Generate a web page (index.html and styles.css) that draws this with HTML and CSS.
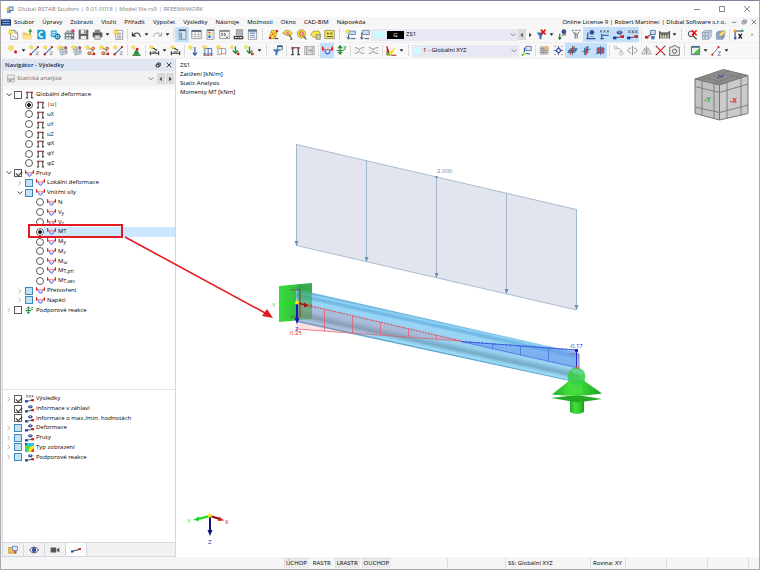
FILE: index.html
```html
<!DOCTYPE html>
<html lang="cs">
<head>
<meta charset="utf-8">
<title>Dlubal RSTAB Student</title>
<link rel="stylesheet" href="styles.css">
</head>
<body>
<svg class="defs" aria-hidden="true">
  <symbol id="star" viewBox="0 0 16 16"><path d="M5 0v10M0 5h10M1.500 1.500l7 7M8.500 1.500l-7 7" stroke="#d9b400" stroke-width="1.200"/><circle cx="5" cy="5" r="2.600" fill="#ffe640"/></symbol>
  <symbol id="app" viewBox="0 0 16 16"><path d="M2 6h8v9H2z" fill="#6f9fd8"/><path d="M5 2h10v9H5z" fill="#4b7db8"/><path d="M7 4h6v5H7z" fill="#cfe2f7"/><path d="M1 4h5v6H1z" fill="#e7c456"/></symbol>
  <symbol id="flag" viewBox="0 0 16 10"><path d="M0 0h16v10H0z" fill="#123a7c"/><path d="M2 3h12M2 7h12" stroke="#b9c9e8" stroke-width="1.500"/></symbol>
  <symbol id="new" viewBox="0 0 16 16"><path d="M4 2h6l4 4v9H4z" fill="#fff" stroke="#666"/><path d="M10 2v4h4M6 10l6 3" fill="none" stroke="#68788a"/><use href="#star" width="14" height="14"/></symbol>
  <symbol id="open" viewBox="0 0 16 16"><path d="M1 5h5l1 2h7v8H1z" fill="#ecc55c"/><path d="M2 9h14l-3 6H1z" fill="#ffe193"/><path d="M12 7V2M10 4l2-3 2 3" fill="none" stroke="#2c9c42" stroke-width="1.800"/></symbol>
  <symbol id="cloud" viewBox="0 0 16 16"><path d="M2 1h9l3 3v11H2z" fill="#159bd6"/><path d="M10 5a3.500 3.500 0 1 0 0 6" fill="none" stroke="#fff" stroke-width="2.200"/></symbol>
  <symbol id="cloud2" viewBox="0 0 16 16"><path d="M1 2h9v10H1z" fill="#4db6e2"/><path d="M3 5h5M3 8h5" stroke="#fff"/><circle cx="11" cy="11" r="3.300" fill="#fff" stroke="#1789c4" stroke-width="2"/><path d="M11 6v10M6 11h10" stroke="#1789c4"/></symbol>
  <symbol id="manager" viewBox="0 0 16 16"><path d="M1 5h14v10H1z" fill="#727b83"/><path d="M3 2h9v4H3z" fill="#a8b2ba"/><path d="M3 8h3v2H3zm4 0h3v2H7zm4 0h2v2h-2zM3 12h3v2H3zm4 0h3v2H7z" fill="#fff"/><circle cx="13" cy="3" r="2.500" fill="#d84343"/></symbol>
  <symbol id="save" viewBox="0 0 16 16"><path d="M1 1h14v14H1z" fill="#666"/><path d="M4 1h8v6H4zM4 10h8v5H4z" fill="#eee"/><path d="M9 2h2v4H9z" fill="#666"/></symbol>
  <symbol id="print" viewBox="0 0 16 16"><path d="M4 1h8v4H4z" fill="#888"/><path d="M1 5h14v7H1z" fill="#555"/><path d="M4 9h8v6H4z" fill="#ddd" stroke="#777"/></symbol>
  <symbol id="report" viewBox="0 0 16 16"><path d="M4 2h10v13H4z" fill="#fff" stroke="#777"/><path d="M6 6h6M6 8.500h6M6 11h6M6 13h6" stroke="#777"/><use href="#star" width="14" height="14"/></symbol>
  <symbol id="undo" viewBox="0 0 16 16"><path d="M2 5v5h5M3 9c4-5 9-4 11 2" fill="none" stroke="#333" stroke-width="1.500"/></symbol>
  <symbol id="redo" viewBox="0 0 16 16"><path d="M14 5v5H9M13 9C9 4 4 5 2 11" fill="none" stroke="#999" stroke-width="1.300"/></symbol>
  <symbol id="nav" viewBox="0 0 16 16"><path d="M3 1h10v14H3z" fill="#d9e5f1" stroke="#6d7d8c"/><path d="M3 2h10" stroke="#47596b" stroke-width="2"/><path d="M5 5h2v9H5z" fill="#5b82aa"/></symbol>
  <symbol id="table" viewBox="0 0 16 16"><path d="M1 2h14v12H1z" fill="#fff" stroke="#777"/><path d="M1 3h14" stroke="#5d6e80" stroke-width="3"/><path d="M1 8h14M1 11h14M6 4v10M11 4v10" stroke="#aaa"/></symbol>
  <symbol id="panel" viewBox="0 0 16 16"><path d="M3 1h10v14H3z" fill="#fff" stroke="#777"/><path d="M3 2h10" stroke="#56687a" stroke-width="2"/><path d="M5 4h3v2H5z" fill="#e33"/><path d="M5 6h3v2H5z" fill="#fc2"/><path d="M5 8h3v2H5z" fill="#3c4"/><path d="M5 10h3v3H5z" fill="#24d"/><path d="M9.500 6h2M9.500 9h2M9.500 12h2" stroke="#777"/></symbol>
  <symbol id="console" viewBox="0 0 16 16"><path d="M1 2h14v12H1z" fill="#f6f6f6" stroke="#777"/><path d="M1 3h14" stroke="#777" stroke-width="2"/><path d="M3 6l3 2-3 2M7 6l3 2-3 2M10 12h3" fill="none" stroke="#333" stroke-width="1.200"/></symbol>
  <symbol id="script" viewBox="0 0 16 16"><path d="M5 1h9v8H5z" fill="#ccd2d8" stroke="#777"/><path d="M6 3h7M6 6h7" stroke="#777"/><path d="M1 10h14v5H1z" fill="#444"/><path d="M3 12.500h3M7 12.500h2M10 12.500h3" stroke="#eee" stroke-width="1.500"/></symbol>
  <symbol id="list" viewBox="0 0 16 16"><path d="M2 1h12v14H2z" fill="#fff" stroke="#777"/><path d="M2 2.500h12" stroke="#56799c" stroke-width="3"/><path d="M4 6h8M4 9h8M4 12h8" stroke="#6f93b7" stroke-width="1.500"/></symbol>
  <symbol id="surf" viewBox="0 0 16 16"><path d="M5 2h9l-4 12H2z" fill="#f6e23b" stroke="#b28c12"/><path d="M5 4l6 9M12 4L3 11" stroke="#d94b2d"/><circle cx="3" cy="13" r="1.700" fill="#c22"/><circle cx="13" cy="3" r="1.700" fill="#c22"/><path d="M10 14h5" stroke="#333" stroke-width="1.500"/></symbol>
  <symbol id="surf2" viewBox="0 0 16 16"><path d="M1 6l4-4h6l4 4-3 4-6-1z" fill="#f6e23b" stroke="#8d8434"/><circle cx="8" cy="6" r="2.500" fill="#e88"/><path d="M10 8l4 6M12 15h3" stroke="#666" stroke-width="1.800"/></symbol>
  <symbol id="surf3" viewBox="0 0 16 16"><circle cx="8" cy="7" r="6" fill="#f6e23b" stroke="#8d8434"/><circle cx="8" cy="7" r="3" fill="#f6b3a3" stroke="#c03030"/><path d="M11 10l4 5" stroke="#666" stroke-width="2"/></symbol>
  <symbol id="surf4" viewBox="0 0 16 16"><path d="M1 8l4-5h8l2 4-2 6-8-1z" fill="#f6e84b" stroke="#8d8434"/><path d="M9 8h6v7H9z" fill="#c9c9a8" stroke="#777"/></symbol>
  <symbol id="surf5" viewBox="0 0 16 16"><path d="M1 2h14v12H1z" fill="#f6e84b" stroke="#777"/><path d="M4 5h3v3H4zm5 0h3v3H9z" fill="#8d6d22"/><path d="M4 11h9" stroke="#555" stroke-width="1.500"/></symbol>
  <symbol id="case" viewBox="0 0 16 16"><path d="M6 3h9v5H6z" fill="#c6dff6" stroke="#4a6c91"/><path d="M5 8v6M3 12l2 3 2-3M8 14h7" fill="none" stroke="#31567e" stroke-width="1.400"/><use href="#star" width="12" height="12"/></symbol>
  <symbol id="case2" viewBox="0 0 16 16"><path d="M5 2h10v6H5z" fill="#c6dff6" stroke="#4a6c91"/><path d="M4 5v9M2 12l2 3 2-3M8 14h7" fill="none" stroke="#31567e" stroke-width="1.400"/></symbol>
  <symbol id="filterx" viewBox="0 0 16 16"><path d="M1 5h11l-4 5v5H5v-5z" fill="#3a6fb3"/><path d="M7 1l7 7M14 1L7 8" stroke="#e11" stroke-width="2.400"/></symbol>
  <symbol id="filter" viewBox="0 0 16 16"><path d="M1 6h12l-5 5v4H5v-4z" fill="#4a7fc3"/><path d="M8 1h7v6H8z" fill="#dce9f7" stroke="#35567e"/><path d="M8 2h7" stroke="#35567e" stroke-width="2"/></symbol>
  <symbol id="force" viewBox="0 0 16 16"><path d="M4 7v8M2 12l2 3 2-3" fill="none" stroke="#287a36" stroke-width="1.700"/><circle cx="10" cy="4" r="3.500" fill="#3e4f9a"/><path d="M7 9l6-1" stroke="#888" stroke-width="2"/></symbol>
  <symbol id="forces" viewBox="0 0 16 16"><path d="M1 2h3M6 2h3M11 2h3M3 4l3 4v6M12 4L9 8v6M7 5v5" fill="none" stroke="#666" stroke-width="1.400"/></symbol>
  <symbol id="res" viewBox="0 0 16 16"><path d="M2 13L14 11" stroke="#555" stroke-width="1.600"/><path d="M0 11h5v4H0z" fill="#1541b8"/><path d="M11 9h5v4h-5z" fill="#d42020"/><path d="M5 5c2-4 7-4 9 0-2 4-7 4-9 0z" fill="#3e4f9a"/><circle cx="9.500" cy="4.500" r="1.300" fill="#b9cdf1"/></symbol>
  <symbol id="resx" viewBox="0 0 16 16"><path d="M2 13L14 11" stroke="#555" stroke-width="1.600"/><path d="M0 11h5v4H0z" fill="#1541b8"/><path d="M11 9h5v4h-5z" fill="#d42020"/><path d="M2 2l3 4M5 2L2 6M7 2l3 4M10 2L7 6M12 2l3 4M15 2l-3 4" stroke="#333"/></symbol>
  <symbol id="dimv" viewBox="0 0 16 16"><path d="M4 5v9h11M2 14h5" fill="none" stroke="#234f9e" stroke-width="1.700"/><circle cx="10" cy="5" r="3.500" fill="#3e4f9a"/><path d="M7 11h6" stroke="#777"/></symbol>
  <symbol id="dimx" viewBox="0 0 16 16"><path d="M2 2l2 3M4 2L2 5M7 2l2 3M9 2L7 5M12 2l2 3M14 2l-2 3" stroke="#333"/><path d="M4 7v7M2 14h5M4 9h10" fill="none" stroke="#234f9e" stroke-width="1.600"/></symbol>
  <symbol id="member" viewBox="0 0 16 16"><path d="M2 13L14 4" stroke="#555" stroke-width="1.500"/><path d="M0 10h5v4H0z" fill="#d42020"/><path d="M8 2h7v6H8z" fill="#cbdcf0" stroke="#35567e"/><path d="M9 10h5v5H9z" fill="#4676b5"/></symbol>
  <symbol id="ruler" viewBox="0 0 16 16"><path d="M1 3v11M15 3v11M1 6h14" stroke="#333" stroke-width="1.500"/><path d="M3 8h10v5H3z" fill="#e9df8e" stroke="#555"/><path d="M5 8v3M8 8v3M11 8v3" stroke="#333"/></symbol>
  <symbol id="magx" viewBox="0 0 16 16"><circle cx="6" cy="7" r="4" fill="none" stroke="#555" stroke-width="1.600"/><path d="M9 10l5 5" stroke="#555" stroke-width="2"/><path d="M7 2l7 7M14 2L7 9" stroke="#e11" stroke-width="2.200"/></symbol>
  <symbol id="box" viewBox="0 0 16 16"><path d="M2 5l4-3h9v9l-4 4H2z" fill="#c7d6e8" stroke="#8093aa"/><path d="M2 5h9v10M11 5l4-3M6 5v10M2 10h9" fill="none" stroke="#8093aa"/></symbol>
  <symbol id="boxs" viewBox="0 0 16 16"><path d="M2 6l3-3h9v8l-3 4H2z" fill="#8da9d3" stroke="#7f95b8"/><path d="M2 6h9v9" fill="none" stroke="#5f7ba8"/><path d="M5 8l7-6 3 3-6 6z" fill="#ffe27a" stroke="#aa8b31"/></symbol>
  <symbol id="axes" viewBox="0 0 16 16"><path d="M3 2v13M2 3h13" stroke="#1d3d86" stroke-width="1.600"/><path d="M1 1h4v4H1z" fill="#e0a020"/><path d="M2 12h3v3H2z" fill="#2a52b0"/><path d="M12 1h3v3h-3z" fill="#279c36"/><path d="M8 7l5 7M13 7l-5 7" stroke="#111" stroke-width="1.700"/></symbol>
  <symbol id="node" viewBox="0 0 16 16"><circle cx="11" cy="10" r="2.200" fill="#c22"/><use href="#star" width="14" height="14"/></symbol>
  <symbol id="line" viewBox="0 0 16 16"><path d="M2 14L13 3" stroke="#456da0" stroke-width="1.500"/><circle cx="2.500" cy="13.500" r="1.700" fill="#c22"/><circle cx="13" cy="3" r="1.700" fill="#c22"/><path d="M10 10h4l-4 4h4" fill="none" stroke="#777"/><use href="#star" width="11" height="11"/></symbol>
  <symbol id="grid" viewBox="0 0 16 16"><path d="M3 4l10-2 2 10-9 3z" fill="#dbe2e9" stroke="#8e99a5"/><path d="M7 3l2 11M11 3l2 10M4 8l10-3M5 11l10-2" stroke="#8e99a5"/><use href="#star" width="12" height="12"/><circle cx="13" cy="4" r="1.800" fill="#c33"/></symbol>
  <symbol id="rel" viewBox="0 0 16 16"><path d="M5 4l7 4-6 5 8 1" fill="none" stroke="#555"/><circle cx="12" cy="5" r="2" fill="#f0d22c" stroke="#a22"/><circle cx="6" cy="12" r="2" fill="#f0d22c" stroke="#a22"/><circle cx="13" cy="13" r="2" fill="#c22"/><use href="#star" width="12" height="12"/></symbol>
  <symbol id="supp" viewBox="0 0 16 16"><path d="M8 5l5 9H3z" fill="#27913a"/><path d="M2 15h12" stroke="#1d6b2b" stroke-width="1.500"/><circle cx="9" cy="6" r="2" fill="#c22"/><use href="#star" width="11" height="11"/></symbol>
  <symbol id="dim" viewBox="0 0 16 16"><path d="M1 12h14M2 9v6M14 9v6M5 4l7 4" stroke="#333" stroke-width="1.500"/><path d="M5 9h6v3H5z" fill="#888"/><use href="#star" width="11" height="11"/></symbol>
  <symbol id="load" viewBox="0 0 16 16"><path d="M10 3v11M7 11l3 4 3-4" fill="none" stroke="#315cab" stroke-width="1.700"/><use href="#star" width="12" height="12"/></symbol>
  <symbol id="loads" viewBox="0 0 16 16"><path d="M4 5h10v9M9 5v9M4 5v9M2 12l2 3 2-3M7 12l2 3 2-3M12 12l2 3 1-3" fill="none" stroke="#315cab" stroke-width="1.200"/><path d="M2 15h13" stroke="#b33"/><use href="#star" width="11" height="11"/></symbol>
  <symbol id="loadg" viewBox="0 0 16 16"><path d="M3 5h11v9M8 5v9M3 5v9" fill="none" stroke="#999" stroke-width="1.300"/><path d="M2 14l12-2" stroke="#b77"/><use href="#star" width="11" height="11"/></symbol>
  <symbol id="sett" viewBox="0 0 16 16"><path d="M8 2v9M4 8l4 4 4-4" fill="none" stroke="#268b38" stroke-width="2"/><circle cx="12" cy="13" r="2" fill="#c22"/><use href="#star" width="10" height="10"/></symbol>
  <symbol id="frame" viewBox="0 0 16 16"><path d="M4 14V4h8v10M1.500 14h4M10.500 14h4" fill="none" stroke="#444" stroke-width="1.800"/><path d="M2 3h3v3H2zM11 3h3v3h-3z" fill="#b33"/></symbol>
  <symbol id="anim" viewBox="0 0 16 16"><path d="M1 2h14v12H1z" fill="#ddd" stroke="#999"/><path d="M4 2v12M12 2v12M6 8h4M9 6l2 2-2 2" fill="none" stroke="#888"/></symbol>
  <symbol id="mom" viewBox="0 0 16 16"><path d="M0 7h16" stroke="#c33" stroke-width="1.400"/><path d="M1 2v6M15 2v6" stroke="#d22" stroke-width="2"/><path d="M0 2l3 5M16 2l-3 5" stroke="#d22"/><path d="M4 8l2 4 2 1 2-1 2-4" fill="#dfe2ff" stroke="#3452e8" stroke-width="1.600"/></symbol>
  <symbol id="react" viewBox="0 0 16 16"><path d="M6 2v12M3 5l3-4 3 4M1 8h10M3 10l3 3 3-3" fill="none" stroke="#248c36" stroke-width="1.700"/><path d="M11 3h4M11 6h3" stroke="#248c36" stroke-width="1.500"/></symbol>
  <symbol id="wave" viewBox="0 0 16 16"><path d="M1 4h3l2 2h3l2-2h4M1 12h3l2-2h3l2 2h4" fill="none" stroke="#8a8f94" stroke-width="1.400"/><path d="M2 8h2M7 8h2M12 8h2" stroke="#bbb"/></symbol>
  <symbol id="scale" viewBox="0 0 16 16"><path d="M1 1l6 14H1z" fill="#e22"/><path d="M1 9l8 6H1z" fill="#1db42c"/><path d="M3 13L14 2l-6 13z" fill="#ffd21f"/><path d="M4 10L1 2M8 15h7" stroke="#a22" stroke-width="1.500"/></symbol>
  <symbol id="cs" viewBox="0 0 16 16"><path d="M5 13V4M5 12l8 1" stroke="#2357ae" stroke-width="1.600"/><path d="M7 2h8v6H7z" fill="#d6e5f5" stroke="#35567e"/><path d="M1 15l5-3" stroke="#279b37" stroke-width="2"/><circle cx="5" cy="12" r="2" fill="#de3"/></symbol>
  <symbol id="gridd" viewBox="0 0 16 16"><path d="M1 2h13v12H1z" fill="#cfcfcf"/><path d="M1 5h13M1 8h13M1 11h13M4 2v12M7 2v12M10 2v12" stroke="#888"/><path d="M7 3l5-2 3 4-5 3z" fill="#e7b77d"/></symbol>
  <symbol id="snap" viewBox="0 0 16 16"><path d="M8 1v14M1 8h14M2 2h2M12 2h2M2 14h2M12 14h2" stroke="#667" stroke-width="1.200"/><path d="M8 4l4 4-4 4-4-4z" fill="#e1e7ff" stroke="#334ba5" stroke-width="1.600"/></symbol>
  <symbol id="plane" viewBox="0 0 16 16"><path d="M1 11L5 5h10l-4 6z" fill="#5c87bd" stroke="#345f96"/><path d="M8 1v14M2 8h12" stroke="#3d4e65"/><path d="M11 2l-7 12" stroke="#d33" stroke-width="1.500"/></symbol>
  <symbol id="planer" viewBox="0 0 16 16"><path d="M5 5l5-3v9l-5 3z" fill="#5c87bd" stroke="#345f96"/><path d="M1 10l13-4" stroke="#3d4e65"/><path d="M10 2l-3 13" stroke="#d33" stroke-width="1.500"/></symbol>
  <symbol id="planeb" viewBox="0 0 16 16"><path d="M3 4h10v8H3z" fill="#d64a52" stroke="#345f96"/><path d="M1 13l13-8M8 1v14" stroke="#345f96"/></symbol>
  <symbol id="g1" viewBox="0 0 16 16"><circle cx="4" cy="4" r="2" fill="none" stroke="#999"/><circle cx="12" cy="12" r="2.500" fill="none" stroke="#999"/><path d="M6 5c5 0 6 2 6 5" fill="none" stroke="#999"/></symbol>
  <symbol id="g2" viewBox="0 0 16 16"><path d="M8 1v14M6 4c-6 2-6 6 0 8M10 4c6 2 6 6 0 8" fill="none" stroke="#888" stroke-width="1.300"/></symbol>
  <symbol id="g3" viewBox="0 0 16 16"><path d="M8 1v14M6 4v9H1zM10 4v9h5z" fill="none" stroke="#999" stroke-width="1.200"/></symbol>
  <symbol id="rx" viewBox="0 0 16 16"><path d="M2 2l12 12M14 2L2 14" stroke="#d22" stroke-width="1.800"/><path d="M1 1h2v2H1zm12 0h2v2h-2zM1 13h2v2H1zm12 0h2v2h-2z" fill="#444"/></symbol>
  <symbol id="cam" viewBox="0 0 16 16"><path d="M1 3h4l1-2h4l1 2h4v12H1z" fill="#eee" stroke="#666" stroke-width="1.300"/><circle cx="8" cy="9" r="3" fill="none" stroke="#555" stroke-width="1.400"/></symbol>
  <symbol id="win" viewBox="0 0 16 16"><path d="M2 2h12v12H2z" fill="#e6f3e4" stroke="#44647f" stroke-width="1.300"/><path d="M2 3h12" stroke="#44647f" stroke-width="2"/><path d="M4 13l9-8v8z" fill="#53b64e"/></symbol>
  <symbol id="sline" viewBox="0 0 16 16"><path d="M2 14L11 3" stroke="#7289a5" stroke-width="1.400"/><circle cx="2" cy="14" r="1.600" fill="#c22"/><circle cx="11" cy="3" r="1.600" fill="#c22"/><path d="M10 10h4l-4 5h4" fill="none" stroke="#44639d"/></symbol>
  <symbol id="contour" viewBox="0 0 16 16"><path d="M0 0h16v16H0z" fill="#20c7ee"/><path d="M0 0h5C6 8 9 10 16 10v6h-9C2 13 0 8 0 0z" fill="#5be034"/><path d="M16 5v11H6c0-7 4-11 10-11z" fill="#ffe52a"/><path d="M16 10v6h-5c0-4 2-6 5-6z" fill="#f2401c"/><path d="M0 0h3v4H0z" fill="#163bd2"/></symbol>
  <symbol id="data" viewBox="0 0 16 16"><path d="M1 4h5l1 2h6v7H1z" fill="#f2c94e" stroke="#a98120"/><path d="M7 2h8v7H7z" fill="#dce9fa" stroke="#2e62b8"/><path d="M9 9l2 5 3-3z" fill="#d33"/></symbol>
  <symbol id="eye" viewBox="0 0 16 16"><path d="M1 8c4-6 10-6 14 0-4 6-10 6-14 0z" fill="#fff" stroke="#333f66" stroke-width="1.500"/><circle cx="8" cy="8" r="3.500" fill="#39509a"/></symbol>
  <symbol id="video" viewBox="0 0 16 16"><path d="M1 4h9v8H1zM11 7l4-3v8l-4-3z" fill="#555"/></symbol>
  <symbol id="beam" viewBox="0 0 16 16"><path d="M2 10L14 7" stroke="#555" stroke-width="1.700"/><path d="M0 9h4v3H0z" fill="#1541b8"/><path d="M12 5h4v3h-4z" fill="#d42020"/></symbol>
  <symbol id="drive" viewBox="0 0 16 16"><path d="M2 2h12v12H2z" fill="#eee" stroke="#888"/><path d="M2 9h12M4 12h5" stroke="#777" stroke-width="1.500"/></symbol>
  <symbol id="dd" viewBox="0 0 8 8"><path d="M1 2h6L4 6z" fill="#222"/></symbol>
  <symbol id="right" viewBox="0 0 8 8"><path d="M2 1l3 3-3 3" fill="none" stroke="#999"/></symbol>
  <symbol id="down" viewBox="0 0 8 8"><path d="M1 2l3 3 3-3" fill="none" stroke="#333" stroke-width="1.300"/></symbol>
  <symbol id="prev" viewBox="0 0 8 8"><path d="M5 1v6L2 4z" fill="#444"/></symbol>
  <symbol id="next" viewBox="0 0 8 8"><path d="M3 1v6l3-3z" fill="#222"/></symbol>
  <symbol id="min" viewBox="0 0 8 8"><path d="M1 4.500h6" stroke="currentColor"/></symbol>
  <symbol id="max" viewBox="0 0 8 8"><path d="M1.500 1.500h5v5h-5z" fill="none" stroke="currentColor"/></symbol>
  <symbol id="restore" viewBox="0 0 8 8"><path d="M1.500 3.500h4v3h-4zM3 3V1.500h4V5H6" fill="none" stroke="currentColor"/></symbol>
  <symbol id="close" viewBox="0 0 8 8"><path d="M1 1l6 6M7 1L1 7" stroke="currentColor"/></symbol>
</svg>

<div class="window">
  <header class="titlebar">
    <svg class="appicon"><use href="#app"/></svg>
    <h1>Dlubal RSTAB Student | 9.01.0018 | Model file.rs9 | RFEEM6WORK</h1>
    <div class="winbtns">
      <button aria-label="Minimalizovat"><svg><use href="#min"/></svg></button>
      <button aria-label="Maximalizovat"><svg><use href="#max"/></svg></button>
      <button aria-label="Zavřít"><svg><use href="#close"/></svg></button>
    </div>
  </header>

  <nav class="menubar">
    <svg class="flag"><use href="#flag"/></svg>
    <button>Soubor</button><button>Úpravy</button><button>Zobrazit</button><button>Vložit</button><button>Přiřadit</button><button>Výpočet</button><button>Výsledky</button><button>Nástroje</button><button>Možnosti</button><button>Okno</button><button>CAD-BIM</button><button>Nápověda</button>
    <span class="license">Online License 9 | Robert Martinec | Dlubal Software s.r.o.</span>
    <div class="docbtns">
      <button aria-label="Minimalizovat dokument"><svg><use href="#min"/></svg></button>
      <button aria-label="Obnovit dokument"><svg><use href="#restore"/></svg></button>
      <button aria-label="Zavřít dokument"><svg><use href="#close"/></svg></button>
    </div>
  </nav>

  <div class="toolbar">
    <button class="tb" aria-label="Nový"><svg><use href="#new"/></svg></button>
    <button class="tb" aria-label="Otevřít"><svg><use href="#open"/></svg></button>
    <button class="tb" aria-label="Cloud"><svg><use href="#cloud"/></svg></button>
    <button class="tb" aria-label="Synchronizovat"><svg><use href="#cloud2"/></svg></button>
    <button class="tb" aria-label="Správce"><svg><use href="#manager"/></svg></button>
    <button class="tb" aria-label="Uložit"><svg><use href="#save"/></svg></button>
    <button class="tb" aria-label="Tisk"><svg><use href="#print"/></svg></button>
    <button class="more" aria-label="Možnosti tisku"><svg><use href="#dd"/></svg></button>
    <button class="tb" aria-label="Protokol"><svg><use href="#report"/></svg></button>
    <i class="sep"></i>
    <button class="tb" aria-label="Zpět"><svg><use href="#undo"/></svg></button>
    <button class="more" aria-label="Historie zpět"><svg><use href="#dd"/></svg></button>
    <button class="tb" aria-label="Znovu"><svg><use href="#redo"/></svg></button>
    <button class="more" aria-label="Historie znovu"><svg><use href="#dd"/></svg></button>
    <i class="sep"></i>
    <button class="tb on" aria-label="Navigátor"><svg><use href="#nav"/></svg></button>
    <button class="tb" aria-label="Tabulky"><svg><use href="#table"/></svg></button>
    <button class="tb" aria-label="Panel"><svg><use href="#panel"/></svg></button>
    <button class="tb" aria-label="Konzole"><svg><use href="#console"/></svg></button>
    <button class="tb" aria-label="Skript"><svg><use href="#script"/></svg></button>
    <button class="tb" aria-label="Seznam"><svg><use href="#list"/></svg></button>
    <i class="sep grip"></i>
    <button class="tb" aria-label="Výběr plochy"><svg><use href="#surf"/></svg></button>
    <button class="tb" aria-label="Výběr oblasti"><svg><use href="#surf2"/></svg></button>
    <button class="tb" aria-label="Výběr kruhem"><svg><use href="#surf3"/></svg></button>
    <button class="tb" aria-label="Výběr polygonem"><svg><use href="#surf4"/></svg></button>
    <button class="tb" aria-label="Výběr oknem"><svg><use href="#surf5"/></svg></button>
    <i class="sep grip"></i>
    <button class="tb" aria-label="Nový zatěžovací stav"><svg><use href="#case"/></svg></button>
    <button class="tb" aria-label="Zatěžovací stavy"><svg><use href="#case2"/></svg></button>
    <div class="combo">
      <i class="chip"></i><i class="chip"></i><b class="tag">G</b>
      <select aria-label="Zatěžovací stav"><option>ZS1</option></select>
      <svg class="caret"><use href="#down"/></svg>
    </div>
    <button class="step dim" aria-label="Předchozí"><svg><use href="#prev"/></svg></button>
    <button class="step" aria-label="Další"><svg><use href="#next"/></svg></button>
    <button class="tb" aria-label="Zrušit filtr"><svg><use href="#filterx"/></svg></button>
    <button class="more" aria-label="Možnosti filtru"><svg><use href="#dd"/></svg></button>
    <button class="tb" aria-label="Zatížení"><svg><use href="#force"/></svg></button>
    <button class="tb" aria-label="Hodnoty zatížení"><svg><use href="#forces"/></svg></button>
    <button class="tb on" aria-label="Reakce"><svg><use href="#dimv"/></svg></button>
    <button class="tb on" aria-label="Hodnoty reakcí"><svg><use href="#dimx"/></svg></button>
    <button class="tb on" aria-label="Výsledky"><svg><use href="#res"/></svg></button>
    <button class="tb on" aria-label="Hodnoty výsledků"><svg><use href="#resx"/></svg></button>
    <i class="sep"></i>
    <button class="tb" aria-label="Řez"><svg><use href="#member"/></svg></button>
    <button class="tb" aria-label="Kóty"><svg><use href="#ruler"/></svg></button>
    <button class="more" aria-label="Možnosti kót"><svg><use href="#dd"/></svg></button>
    <i class="sep grip"></i>
    <button class="tb" aria-label="Zrušit lupu"><svg><use href="#magx"/></svg></button>
    <button class="tb" aria-label="Drátový model"><svg><use href="#box"/></svg></button>
    <button class="tb" aria-label="Plný model"><svg><use href="#boxs"/></svg></button>
    <i class="sep"></i>
    <button class="tb" aria-label="Pohled X"><svg><use href="#axes"/></svg></button>
    <button class="overflow" aria-label="Další nástroje">»</button>
  </div>

  <div class="toolbar">
    <button class="tb" aria-label="Uzel"><svg><use href="#node"/></svg></button>
    <button class="more" aria-label="Možnosti uzlu"><svg><use href="#dd"/></svg></button>
    <button class="tb" aria-label="Linie"><svg><use href="#line"/></svg></button>
    <button class="tb" aria-label="Prut"><svg><use href="#line"/></svg></button>
    <button class="tb" aria-label="Sada prutů"><svg><use href="#grid"/></svg></button>
    <button class="tb" aria-label="Síť"><svg><use href="#grid"/></svg></button>
    <button class="tb" aria-label="Kloub"><svg><use href="#rel"/></svg></button>
    <button class="tb" aria-label="Vazba"><svg><use href="#rel"/></svg></button>
    <button class="tb" aria-label="Nelinearita"><svg><use href="#line"/></svg></button>
    <i class="sep"></i>
    <button class="tb" aria-label="Podpora"><svg><use href="#supp"/></svg></button>
    <i class="sep"></i>
    <button class="tb" aria-label="Kóta"><svg><use href="#dim"/></svg></button>
    <button class="more" aria-label="Možnosti kóty"><svg><use href="#dd"/></svg></button>
    <button class="tb" aria-label="Text"><svg><use href="#dim"/></svg></button>
    <i class="sep"></i>
    <button class="tb" aria-label="Síla"><svg><use href="#load"/></svg></button>
    <button class="tb" aria-label="Zatížení prutu"><svg><use href="#loads"/></svg></button>
    <button class="tb" aria-label="Zatížení sady"><svg><use href="#loadg"/></svg></button>
    <button class="tb" aria-label="Posun podpory"><svg><use href="#sett"/></svg></button>
    <button class="tb" aria-label="Imperfekce"><svg><use href="#sett"/></svg></button>
    <button class="more" aria-label="Další zatížení"><svg><use href="#dd"/></svg></button>
    <i class="sep grip"></i>
    <button class="tb" aria-label="Filtr"><svg><use href="#filter"/></svg></button>
    <i class="sep"></i>
    <button class="tb" aria-label="Deformace"><svg><use href="#frame"/></svg></button>
    <button class="tb" aria-label="Animace"><svg><use href="#anim"/></svg></button>
    <i class="sep"></i>
    <button class="tb on" aria-label="Vnitřní síly"><svg><use href="#mom"/></svg></button>
    <button class="tb" aria-label="Podporové reakce"><svg><use href="#react"/></svg></button>
    <i class="sep"></i>
    <button class="tb" aria-label="Průběh"><svg><use href="#wave"/></svg></button>
    <button class="tb" aria-label="Vyhlazení"><svg><use href="#wave"/></svg></button>
    <i class="sep"></i>
    <button class="tb" aria-label="Barevná škála"><svg><use href="#scale"/></svg></button>
    <button class="more" aria-label="Možnosti škály"><svg><use href="#dd"/></svg></button>
    <i class="sep grip"></i>
    <div class="combo">
      <i class="chip"></i>
      <select aria-label="Souřadný systém"><option>1 - Globální XYZ</option></select>
      <svg class="caret"><use href="#down"/></svg>
    </div>
    <button class="tb" aria-label="Nový systém"><svg><use href="#cs"/></svg></button>
    <i class="sep"></i>
    <button class="tb" aria-label="Rastr"><svg><use href="#gridd"/></svg></button>
    <button class="tb" aria-label="Uchopení"><svg><use href="#snap"/></svg></button>
    <button class="tb on" aria-label="Rovina XY"><svg><use href="#plane"/></svg></button>
    <button class="tb on" aria-label="Rovina YZ"><svg><use href="#planer"/></svg></button>
    <button class="tb on" aria-label="Rovina XZ"><svg><use href="#planeb"/></svg></button>
    <i class="sep"></i>
    <button class="tb" aria-label="Posun"><svg><use href="#g1"/></svg></button>
    <button class="tb" aria-label="Otočení"><svg><use href="#g2"/></svg></button>
    <button class="tb" aria-label="Zrcadlení"><svg><use href="#g3"/></svg></button>
    <button class="tb" aria-label="Spojení"><svg><use href="#rx"/></svg></button>
    <button class="tb" aria-label="Snímek"><svg><use href="#cam"/></svg></button>
    <i class="sep grip"></i>
    <button class="tb" aria-label="Okno"><svg><use href="#win"/></svg></button>
    <button class="more" aria-label="Možnosti okna"><svg><use href="#dd"/></svg></button>
    <button class="tb" aria-label="Úsečka"><svg><use href="#sline"/></svg></button>
    <button class="more" aria-label="Možnosti úsečky"><svg><use href="#dd"/></svg></button>
    <i class="fill"></i>
  </div>

  <main class="work">
    <aside class="navigator">
      <div class="navhead"><h2>Navigátor - Výsledky</h2>
        <button aria-label="Uvolnit"><svg><use href="#restore"/></svg></button>
        <button aria-label="Zavřít panel"><svg><use href="#close"/></svg></button>
      </div>
      <div class="analysis">
        <svg class="drive"><use href="#drive"/></svg>
        <select aria-label="Typ analýzy"><option>Statická analýza</option></select>
        <svg class="caret"><use href="#down"/></svg>
        <button class="step dim" aria-label="Předchozí analýza"><svg><use href="#prev"/></svg></button>
        <button class="step dim" aria-label="Další analýza"><svg><use href="#next"/></svg></button>
      </div>
      <div class="tree results">
        <label class="row"><svg class="tw"><use href="#down"/></svg><input type="checkbox"><svg class="ic"><use href="#frame"/></svg>Globální deformace</label>
        <label class="row l1"><input type="radio" name="def" checked><svg class="ic"><use href="#frame"/></svg>|u|</label>
        <label class="row l1"><input type="radio" name="def"><svg class="ic"><use href="#frame"/></svg>u<small>X</small></label>
        <label class="row l1"><input type="radio" name="def"><svg class="ic"><use href="#frame"/></svg>u<small>Y</small></label>
        <label class="row l1"><input type="radio" name="def"><svg class="ic"><use href="#frame"/></svg>u<small>Z</small></label>
        <label class="row l1"><input type="radio" name="def"><svg class="ic"><use href="#frame"/></svg>φ<small>X</small></label>
        <label class="row l1"><input type="radio" name="def"><svg class="ic"><use href="#frame"/></svg>φ<small>Y</small></label>
        <label class="row l1"><input type="radio" name="def"><svg class="ic"><use href="#frame"/></svg>φ<small>Z</small></label>
        <label class="row"><svg class="tw"><use href="#down"/></svg><input type="checkbox" checked><svg class="ic"><use href="#mom"/></svg>Pruty</label>
        <label class="row l1"><svg class="tw"><use href="#right"/></svg><input type="checkbox" class="mixed"><svg class="ic"><use href="#mom"/></svg>Lokální deformace</label>
        <label class="row l1"><svg class="tw"><use href="#down"/></svg><input type="checkbox" class="mixed"><svg class="ic"><use href="#mom"/></svg>Vnitřní síly</label>
        <label class="row l2"><input type="radio" name="force"><svg class="ic"><use href="#mom"/></svg>N</label>
        <label class="row l2"><input type="radio" name="force"><svg class="ic"><use href="#mom"/></svg>V<sub>y</sub></label>
        <label class="row l2"><input type="radio" name="force"><svg class="ic"><use href="#mom"/></svg>V<sub>z</sub></label>
        <label class="row l2 picked"><input type="radio" name="force" checked><svg class="ic"><use href="#mom"/></svg>M<small>T</small></label>
        <label class="row l2"><input type="radio" name="force"><svg class="ic"><use href="#mom"/></svg>M<sub>y</sub></label>
        <label class="row l2"><input type="radio" name="force"><svg class="ic"><use href="#mom"/></svg>M<sub>z</sub></label>
        <label class="row l2"><input type="radio" name="force"><svg class="ic"><use href="#mom"/></svg>M<sub>ω</sub></label>
        <label class="row l2"><input type="radio" name="force"><svg class="ic"><use href="#mom"/></svg>M<sub>T,pri</sub></label>
        <label class="row l2"><input type="radio" name="force"><svg class="ic"><use href="#mom"/></svg>M<sub>T,sec</sub></label>
        <label class="row l1"><svg class="tw"><use href="#right"/></svg><input type="checkbox" class="mixed"><svg class="ic"><use href="#mom"/></svg>Přetvoření</label>
        <label class="row l1"><svg class="tw"><use href="#right"/></svg><input type="checkbox" class="mixed"><svg class="ic"><use href="#mom"/></svg>Napětí</label>
        <label class="row"><svg class="tw"><use href="#right"/></svg><input type="checkbox"><svg class="ic"><use href="#react"/></svg>Podporové reakce</label>
      </div>
      <div class="tree options">
        <label class="row"><svg class="tw"><use href="#right"/></svg><input type="checkbox" checked><svg class="ic"><use href="#resx"/></svg>Výsledky</label>
        <label class="row"><i class="tw"></i><input type="checkbox" checked><svg class="ic"><use href="#res"/></svg>Informace v záhlaví</label>
        <label class="row"><i class="tw"></i><input type="checkbox" checked><svg class="ic"><use href="#res"/></svg>Informace o max./min. hodnotách</label>
        <label class="row"><svg class="tw"><use href="#right"/></svg><input type="checkbox" class="mixed"><svg class="ic"><use href="#res"/></svg>Deformace</label>
        <label class="row"><svg class="tw"><use href="#right"/></svg><input type="checkbox" class="mixed"><svg class="ic"><use href="#res"/></svg>Pruty</label>
        <label class="row"><svg class="tw"><use href="#right"/></svg><input type="checkbox" class="mixed"><svg class="ic"><use href="#contour"/></svg>Typ zobrazení</label>
        <label class="row"><svg class="tw"><use href="#right"/></svg><input type="checkbox" class="mixed"><svg class="ic"><use href="#res"/></svg>Podporové reakce</label>
      </div>
      <div class="tabs">
        <button aria-label="Data"><svg><use href="#data"/></svg></button>
        <button aria-label="Zobrazit"><svg><use href="#eye"/></svg></button>
        <button aria-label="Pohledy"><svg><use href="#video"/></svg></button>
        <button class="current" aria-label="Výsledky"><svg><use href="#beam"/></svg></button>
      </div>
    </aside>

    <section class="viewport">
      <div class="caption">
        <p>ZS1</p><p>Zatížení [kN/m]</p><p>Static Analysis</p><p>Momenty M<small>T</small> [kNm]</p>
      </div>
      <svg class="scene" viewBox="176 59 583 498" preserveAspectRatio="xMinYMin meet" role="img" aria-label="Model nosníku">
        <defs>
          <linearGradient id="gb" gradientUnits="userSpaceOnUse" x1="430" y1="318" x2="423" y2="350">
            <stop offset="0" stop-color="#7cc2e8"/><stop offset=".05" stop-color="#61aede"/><stop offset=".1" stop-color="#8fd2f3"/><stop offset=".17" stop-color="#68b5e3"/><stop offset=".22" stop-color="#6fbae6"/><stop offset=".28" stop-color="#94d3f5"/><stop offset=".6" stop-color="#93cef0"/><stop offset=".7" stop-color="#79b4d3"/><stop offset=".77" stop-color="#6fa5c0"/><stop offset=".86" stop-color="#8bcdf0"/><stop offset=".92" stop-color="#9adcf9"/><stop offset=".96" stop-color="#559cc5"/><stop offset="1" stop-color="#7cc6ee"/>
          </linearGradient>
          <linearGradient id="gg"><stop offset="0" stop-color="#3bdc3e"/><stop offset=".5" stop-color="#32c33c"/><stop offset=".6" stop-color="#2aa24b"/><stop offset="1" stop-color="#43b657"/></linearGradient>
          <linearGradient id="gc"><stop offset="0" stop-color="#1fae22"/><stop offset=".35" stop-color="#46dd3e"/><stop offset=".7" stop-color="#31cb30"/><stop offset="1" stop-color="#159a1b"/></linearGradient>
        </defs>
        <g stroke="#a9bdd2">
          <path d="M296.500 144.500L576.500 209.500V310L296.500 245.500z" fill="#e2e5ed"/>
          <path d="M296.500 144v100M366.500 160v100M436.500 177v99M506.500 193v99M576.500 209v100" stroke="#a3b9cf"/>
        </g>
        <path d="M294.500 241h4l-2 5zM364.500 257h4l-2 5zM434.500 273h4l-2 5zM504.500 289h4l-2 5zM574.500 305h4l-2 5zM435.500 176h2v2h-2z" fill="#6c8fb3"/>
        <text x="437" y="173" fill="#6685a8">2.000</text>

        <path d="M279 286L312 283V319L279 322z" fill="url(#gg)"/>
        <path d="M296 289L579 353V383L296 322z" fill="url(#gb)" opacity=".95"/>
        <path d="M297 285L312 283V319L297 320z" fill="#32a84c" opacity=".6"/>
        <path d="M290 290l10-.500v27l-10 .500M300 317v-27" fill="none" stroke="#6b6440"/>
        <path d="M297 303L461 341 296 329z" fill="#f06070" fill-opacity=".18"/>
        <path d="M296 329L461 341M324.500 309.500V331M352.500 316v17M380.500 322.500V335M408.500 329v8M436.500 336v3" fill="none" stroke="#e8606c" stroke-width=".800"/>
        <path d="M311 306L461 341" stroke="#e83e4a" stroke-dasharray="2 1"/>
        <path d="M461 341.500L576.500 350V367.500z" fill="#5f8fee" fill-opacity=".5" stroke="#4a6ce5" stroke-width=".800"/>
        <path d="M492.500 344v5M520.500 346v9.500M548.500 348v14" stroke="#4d70de" stroke-width=".800"/>
        <path d="M461 341.500L576 350" stroke="#3047d8" stroke-dasharray="3 1" stroke-width=".800"/>
        <path d="M570 354h9v27" fill="none" stroke="#a06d8a"/>
        <path d="M576.500 350V367" stroke="#1c28dc"/>
        <path d="M575 349h3v3h-3z" fill="#1c28dc"/>

        <path d="M570 401h14v11q-7 4-14 0z" fill="url(#gc)"/>
        <path d="M551 398l26-3 25 4-24 3.500z" fill="#25a924"/>
        <path d="M570 380h13l19 13.500q-25 4-50 1z" fill="url(#gc)"/>
        <path d="M570 380l4 15 9-1-1-14z" fill="#56e94c" opacity=".4"/>
        <circle cx="576.500" cy="376.500" r="9" fill="#38cf45" opacity=".88"/>
        <path d="M571 371q7-5 13 2-6 4-13-2z" fill="#76d6bc" opacity=".6"/>
        <circle cx="576.500" cy="367.500" r="1.200" fill="#e43"/>

        <path d="M297 303l-15 1" stroke="#15e51b" stroke-width="1.500"/>
        <path d="M285 302v4l-5-2z" fill="#15e51b"/>
        <path d="M297 303v17" stroke="#1512c4" stroke-width="2"/>
        <path d="M294.500 318h5l-2.500 6z" fill="#1512c4"/>
        <path d="M297 303l10 2.300" stroke="#b01313" stroke-width="1.500"/>
        <path d="M304 302.500l5 3-5 2z" fill="#b01313"/>
        <circle cx="297" cy="302.500" r="2" fill="#ffe516"/>
        <text x="272" y="307" fill="#18dd1d">Y</text>
        <text x="309" y="308" fill="#e01818">X</text>
        <text x="295" y="331" fill="#3b36d8">Z</text>
        <text x="290" y="335" fill="#e01818">0.25</text>
        <text x="569" y="348" fill="#1a1ae0">-0.17</text>

        <g stroke="#777">
          <path d="M695 79L723.500 69.500 748 75.500 719.500 85z" fill="#8d8d8d"/>
          <path d="M695 79L719.500 85V120L695 113.500z" fill="#c2c2c2"/>
          <path d="M748 75.500L719.500 85V120L748 113.500z" fill="#cbcbcb"/>
          <path d="M695 86.500l24.500 6L748 84M695 107l24.500 5.500L748 105M702 81v34.500M714 84v34.500M727 82.500v35.500M741 78v37M702 77l24 6M716 72l25 6M700.500 80.500L729 71M713 83.500L742 74" fill="none" stroke="#7f7f7f"/>
        </g>
        <path d="M717 78l7-3M718 75l5 3" stroke="#454b93"/>
        <text x="704" y="102" fill="#25b43b" class="face">-Y</text>
        <text x="730" y="103" fill="#e8202c" class="face">-X</text>

        <path d="M210 516l-12 3" stroke="#12d91a" stroke-width="2"/>
        <path d="M199 516.500v4.500l-6-1z" fill="#12d91a"/>
        <path d="M210 516v16" stroke="#11157c" stroke-width="2"/>
        <path d="M207.500 530h5l-2.500 6z" fill="#11157c"/>
        <path d="M210 516l10 3" stroke="#8d1010" stroke-width="2"/>
        <path d="M219 516.500l5 4-6 .500z" fill="#e01818"/>
        <circle cx="210" cy="515.500" r="2" fill="#ffe516"/>
        <text x="187" y="523" fill="#18dd1d">Y</text>
        <text x="225" y="524" fill="#e01818">X</text>
        <text x="208" y="544" fill="#24288f">Z</text>
      </svg>
    </section>
  </main>

  <footer class="status">
    <div class="modes"><button class="pressed">ÚCHOP</button><button>RASTR</button><button class="pressed">LRASTR</button><button class="pressed">OUCHOP</button></div>
    <span class="c0"></span><span class="c1">SS: Globální XYZ</span><span class="c2">Rovina: XY</span><span class="c3"></span><span class="c3"></span><span class="c3"></span><span class="c4"></span>
  </footer>

  <svg class="callout" viewBox="0 0 250 100" aria-hidden="true">
    <path d="M1 1h93v12H1z" fill="none" stroke="#e21b23" stroke-width="2"/>
    <path d="M97 13L239 90" stroke="#e21b23" stroke-width="1.600"/>
    <path d="M245 94l-11-2 5-7z" fill="#e21b23"/>
  </svg>
</div>
</body>
</html>
```
FILE: styles.css
```css
* { box-sizing: border-box; }
html, body { margin: 0; height: 100%; }
body { font: 6px/9px "Open Sans", "Noto Sans", sans-serif; color: #000; background: #fff; }
svg { display: block; }
button, select, input { font: inherit; color: inherit; margin: 0; padding: 0; border: 0; background: none; }
h1, h2, p { margin: 0; font-size: inherit; font-weight: normal; }
.defs { position: absolute; width: 0; height: 0; }

.window { position: relative; height: 100vh; display: flex; flex-direction: column; border: 1px solid #aaa; border-top-color: #7f7fa3; background: #f5f5f5; }

.titlebar { display: flex; align-items: center; height: 16px; padding-left: 5px; background: #fff; color: #808080; gap: 4px; }
.titlebar h1 { flex: 1; }
.appicon { width: 8px; height: 9px; }
.winbtns { display: flex; color: #888; }
.winbtns button { width: 25px; display: grid; place-items: center; }
.winbtns svg { width: 8px; height: 8px; }

.menubar { display: flex; align-items: center; height: 10px; background: #f6f6f6; }
.menubar > button { padding-right: 8px; }
.flag { width: 10px; height: 7px; margin-right: 3px; }
.license { margin-left: auto; }
.docbtns { display: flex; gap: 4px; padding: 0 2px 0 5px; color: #57607a; }
.docbtns svg { width: 6px; height: 6px; }

.toolbar { display: flex; align-items: center; height: 16px; background: #f8f8f8; padding-left: 5px; border-bottom: 1px solid #f0f0f0; }
.tb { width: 14px; height: 15px; flex: none; display: grid; place-items: center; }
.tb svg { width: 11px; height: 11px; }
.tb.on { background: #c2e0f9; }
.more { width: 7px; height: 14px; flex: none; display: grid; place-items: center; }
.more svg { width: 5px; height: 5px; }
.sep { width: 4px; height: 12px; flex: none; background: linear-gradient(#dcdcdc, #dcdcdc) center / 1px 100% no-repeat; }
.sep.grip { width: 7px; background: repeating-linear-gradient(#bbb 0 1px, transparent 1px 2px) center / 1px 100% no-repeat; }
.combo { flex: 1; min-width: 0; display: flex; align-items: center; height: 12px; background: #e8e8f4; padding: 0 2px; }
.combo select, .analysis select { flex: 1; min-width: 0; appearance: none; height: 10px; }
.combo select { padding-left: 2px; }
.chip { width: 6px; height: 7px; margin-right: 1px; background: #c9fbff; flex: none; }
.tag { width: 17px; height: 8px; line-height: 8px; background: #000; color: #fff; text-align: center; font-weight: normal; flex: none; }
.caret { width: 6px; height: 6px; flex: none; opacity: .6; }
.step { width: 8px; height: 11px; display: grid; place-items: center; flex: none; }
.step svg { width: 6px; height: 6px; }
.step.dim { background: #dadada; }
.overflow { width: 14px; color: #555; }
.fill { width: 29px; flex: none; }

.work { flex: 1; min-height: 0; display: flex; }
.navigator { width: 174px; flex: none; margin-left: 1px; display: flex; flex-direction: column; background: #fff; border: 1px solid #d5d6e2; border-top: 0; }
.navhead { display: flex; align-items: center; height: 12px; flex: none; padding: 0 3px 0 2px; background: #dfe5f1; gap: 5px; }
.navhead h2 { flex: 1; font-weight: 600; color: #1d2b45; }
.navhead svg { width: 6px; height: 6px; }
.analysis { display: flex; align-items: center; height: 19px; padding: 0 1px 0 3px; background: #f1f1f1; color: #6c6c6c; gap: 1px; flex: none; border-bottom: 4px solid #f8f8f8; }
.drive { width: 10px; height: 9px; flex: none; }
.analysis .caret { margin-right: 2px; }
.tree { display: grid; grid-auto-rows: 1fr; flex: none; }
.results { height: 225px; margin-bottom: 74px; }
.options { height: 73px; padding-top: 4px; border-top: 1px solid #e2e2ea; }
.row { display: flex; align-items: center; padding-left: 3px; white-space: nowrap; min-height: 0; }
.row.l1 { padding-left: 14px; }
.row.l2 { padding-left: 33px; }
.row.l1 > input[type=radio] { margin-left: 8px; }
.tw { width: 6px; height: 6px; margin-right: 2px; }
.ic { width: 9px; height: 9px; margin: 0 2px 0 3px; }
.row input { appearance: none; width: 8px; height: 8px; border: 1px solid #5c5c5c; background: #fff; flex: none; }
.row input[type=radio] { border-radius: 50%; }
.row input[type=radio]:checked { background: radial-gradient(circle, #222 0 2px, #fff 2px); }
.row input[type=checkbox]:checked::after { content: ""; display: block; width: 5px; height: 3px; margin: 1px 0 0 1px; border: solid #333; border-width: 0 0 1px 1px; transform: rotate(-45deg); }
.row input.mixed { border-color: #4287b8; background: #c4e2f6; }
.picked { background: linear-gradient(#cce8ff, #cce8ff) 41px 0 no-repeat; }
small { font-size: 5px; }
sub { font-size: 5px; position: relative; top: 1px; vertical-align: baseline; }
.tabs { margin-top: auto; height: 14px; flex: none; display: flex; background: #f1f1f1; border-top: 1px solid #d5d6e2; }
.tabs button { width: 21px; display: grid; place-items: center; border-right: 1px solid #d5d6e2; }
.tabs button.current { background: #fff; }
.tabs svg { width: 10px; height: 10px; }

.viewport { position: relative; flex: 1; min-width: 0; background: #fff; }
.caption { position: absolute; left: 4px; top: 2px; }
.scene { width: 100%; height: 100%; font-size: 6px; }
.face { font-size: 7px; font-weight: 700; }

.status { display: flex; align-items: center; height: 12px; background: #f5f5f5; }
.status span { border-left: 1px solid #ddd; height: 10px; line-height: 10px; padding-left: 2px; }
.modes { display: flex; gap: 2px; margin-left: 283px; flex: 1; }
.modes button { padding: 0 2px; height: 10px; }
.modes .pressed { background: #ebebeb; box-shadow: inset 1px 1px 0 #ddd; }
.c0 { width: 58px; }
.c1 { width: 85px; }
.c2 { width: 35px; white-space: nowrap; }
.c3 { width: 41px; }
.c4 { width: 11px; }

.callout { position: absolute; left: 27px; top: 223px; width: 250px; height: 100px; pointer-events: none; }
```
